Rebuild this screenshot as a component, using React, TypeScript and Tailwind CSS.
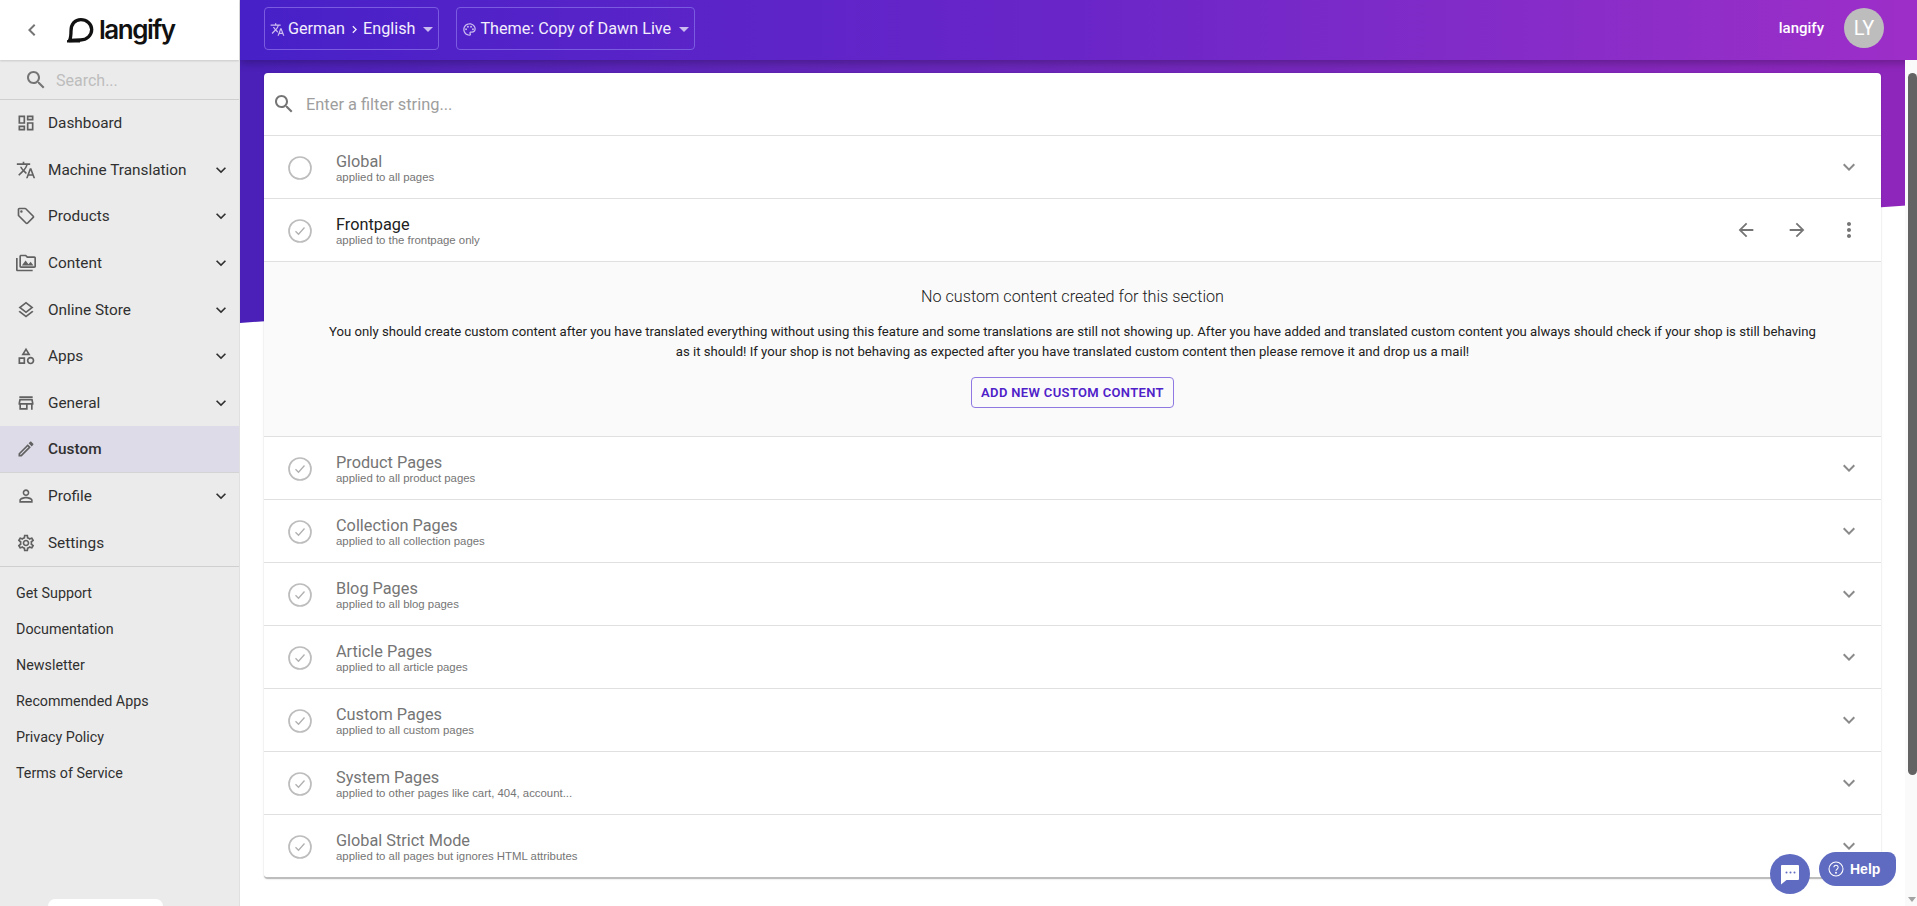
import { ReactNode } from "react";

const paths = {
  dashboard:
    "M19 5v2h-4V5h4M9 5v6H5V5h4m10 8v6h-4v-6h4M9 17v2H5v-2h4M21 3h-8v6h8V3zM11 3H3v10h8V3zm10 8h-8v10h8V11zm-10 4H3v6h8v-6z",
  translate:
    "M12.87 15.07l-2.54-2.51.03-.03c1.74-1.94 2.98-4.17 3.71-6.53H17V4h-7V2H8v2H1v1.99h11.17C11.5 7.92 10.43 9.75 9 11.35 8.07 10.32 7.3 9.19 6.69 8h-2c.73 1.63 1.73 3.17 2.98 4.56l-5.09 5.02L4 19l5-5 3.11 3.11.76-2.04zM18.5 10h-2L12 22h2l1.12-3h4.75L21 22h2l-4.5-12zm-2.62 7l1.62-4.33L19.12 17h-3.24z",
  tag: "M21.41 11.58l-9-9C12.05 2.22 11.55 2 11 2H4c-1.1 0-2 .9-2 2v7c0 .55.22 1.05.59 1.42l9 9c.36.36.86.58 1.41.58s1.05-.22 1.41-.59l7-7c.37-.36.59-.86.59-1.41s-.23-1.06-.59-1.42zM13 20.01L4 11V4h7v-.01l9 9-7 7.02zM6.5 5A1.5 1.5 0 1 0 6.5 8 1.5 1.5 0 1 0 6.5 5z",
  media:
    "M2 6H0v5h.01L0 20c0 1.1.9 2 2 2h18v-2H2V6zm5 9h14l-3.5-4.5-2.5 3.01L11.5 9zM22 4h-8l-2-2H6c-1.1 0-1.99.9-1.99 2L4 16c0 1.1.9 2 2 2h16c1.1 0 2-.9 2-2V6c0-1.1-.9-2-2-2zm0 12H6V4h5.17l1.41 1.41.59.59H22v10z",
  layers:
    "M11.99 18.54l-7.37-5.73L3 14.07l9 7 9-7-1.63-1.27zM12 16l7.36-5.73L21 9l-9-7-9 7 1.63 1.27L12 16zm0-11.47L17.74 9 12 13.47 6.26 9 12 4.53z",
  category:
    "M12 2l-5.5 9h11L12 2zm0 3.84L13.93 9h-3.87L12 5.84zM17.5 13c-2.49 0-4.5 2.01-4.5 4.5s2.01 4.5 4.5 4.5 4.5-2.01 4.5-4.5-2.01-4.5-4.5-4.5zm0 7c-1.38 0-2.5-1.12-2.5-2.5s1.12-2.5 2.5-2.5 2.5 1.12 2.5 2.5-1.12 2.5-2.5 2.5zM3 21.5h8v-8H3v8zm2-6h4v4H5v-4z",
  store:
    "M20 4H4v2h16V4zm1 10v-2l-1-5H4l-1 5v2h1v6h10v-6h4v6h2v-6h1zm-9 4H6v-4h6v4zm-6.96-6l.6-3h12.72l.6 3H5.04z",
  edit: "M14.06 9.02l.92.92L5.92 19H5v-.92l9.06-9.06M17.66 3c-.25 0-.51.1-.7.29l-1.83 1.83 3.75 3.75 1.83-1.83c.39-.39.39-1.02 0-1.41l-2.34-2.34c-.2-.2-.45-.29-.71-.29zm-3.6 3.19L3 17.25V21h3.75L17.81 9.94l-3.75-3.75z",
  person:
    "M12 5.9c1.16 0 2.1.94 2.1 2.1s-.94 2.1-2.1 2.1S9.9 9.16 9.9 8s.94-2.1 2.1-2.1m0 9c2.97 0 6.1 1.46 6.1 2.1v1.1H5.9V17c0-.64 3.13-2.1 6.1-2.1M12 4C9.79 4 8 5.79 8 8s1.79 4 4 4 4-1.79 4-4-1.79-4-4-4zm0 9c-2.67 0-8 1.34-8 4v3h16v-3c0-2.66-5.33-4-8-4z",
  settings:
    "M19.43 12.98c.04-.32.07-.64.07-.98 0-.34-.03-.66-.07-.98l2.11-1.65c.19-.15.24-.42.12-.64l-2-3.46c-.09-.16-.26-.25-.44-.25-.06 0-.12.01-.17.03l-2.49 1c-.52-.4-1.08-.73-1.69-.98l-.38-2.65C14.46 2.18 14.25 2 14 2h-4c-.25 0-.46.18-.49.42l-.38 2.65c-.61.25-1.17.59-1.69.98l-2.49-1c-.06-.02-.12-.03-.18-.03-.17 0-.34.09-.43.25l-2 3.46c-.13.22-.07.49.12.64l2.11 1.65c-.04.32-.07.65-.07.98 0 .33.03.66.07.98l-2.11 1.65c-.19.15-.24.42-.12.64l2 3.46c.09.16.26.25.44.25.06 0 .12-.01.17-.03l2.49-1c.52.4 1.08.73 1.69.98l.38 2.65c.03.24.24.42.49.42h4c.25 0 .46-.18.49-.42l.38-2.65c.61-.25 1.17-.59 1.69-.98l2.49 1c.06.02.12.03.18.03.17 0 .34-.09.43-.25l2-3.46c.12-.22.07-.49-.12-.64l-2.11-1.65zm-1.98-1.71c.04.31.05.52.05.73 0 .21-.02.43-.05.73l-.14 1.13.89.7 1.08.84-.7 1.21-1.27-.51-1.04-.42-.9.68c-.43.32-.84.56-1.25.73l-1.06.43-.16 1.13-.2 1.35h-1.4l-.19-1.35-.16-1.13-1.06-.43c-.43-.18-.83-.41-1.23-.71l-.91-.7-1.06.43-1.27.51-.7-1.21 1.08-.84.89-.7-.14-1.13c-.03-.31-.05-.54-.05-.74s.02-.43.05-.73l.14-1.13-.89-.7-1.08-.84.7-1.21 1.27.51 1.04.42.9-.68c.43-.32.84-.56 1.25-.73l1.06-.43.16-1.13.2-1.35h1.39l.19 1.35.16 1.13 1.06.43c.43.18.83.41 1.23.71l.91.7 1.06-.43 1.27-.51.7 1.21-1.07.85-.89.7.14 1.13zM12 8c-2.21 0-4 1.79-4 4s1.79 4 4 4 4-1.79 4-4-1.79-4-4-4zm0 6c-1.1 0-2-.9-2-2s.9-2 2-2 2 .9 2 2-.9 2-2 2z",
  search:
    "M15.5 14h-.79l-.28-.27C15.41 12.59 16 11.11 16 9.5 16 5.91 13.09 3 9.5 3S3 5.91 3 9.5 5.91 16 9.5 16c1.61 0 3.09-.59 4.23-1.57l.27.28v.79l5 4.99L20.49 19l-4.99-5zm-6 0C7.01 14 5 11.99 5 9.5S7.01 5 9.5 5 14 7.01 14 9.5 11.99 14 9.5 14z",
  expand: "M16.59 8.59L12 13.17 7.41 8.59 6 10l6 6 6-6z",
  chevronLeft: "M15.41 7.41L14 6l-6 6 6 6 1.41-1.41L10.83 12z",
  chevronRight: "M8.59 16.59L10 18l6-6-6-6-1.41 1.41L13.17 12z",
  arrowBack: "M20 11H7.83l5.59-5.59L12 4l-8 8 8 8 1.41-1.41L7.83 13H20v-2z",
  arrowForward: "M12 4l-1.41 1.41L16.17 11H4v2h12.17l-5.58 5.59L12 20l8-8z",
  more: "M12 8c1.1 0 2-.9 2-2s-.9-2-2-2-2 .9-2 2 .9 2 2 2zm0 2c-1.1 0-2 .9-2 2s.9 2 2 2 2-.9 2-2-.9-2-2-2zm0 6c-1.1 0-2 .9-2 2s.9 2 2 2 2-.9 2-2-.9-2-2-2z",
  palette:
    "M12 22C6.49 22 2 17.51 2 12S6.49 2 12 2s10 4.04 10 9c0 3.31-2.69 6-6 6h-1.77c-.28 0-.5.22-.5.5 0 .12.05.23.13.33.41.47.64 1.06.64 1.67 0 1.38-1.12 2.5-2.5 2.5zm0-18c-4.41 0-8 3.59-8 8s3.59 8 8 8c.28 0 .5-.22.5-.5 0-.16-.08-.28-.14-.35-.41-.46-.63-1.05-.63-1.65 0-1.38 1.12-2.5 2.5-2.5H16c2.21 0 4-1.79 4-4 0-3.86-3.59-7-8-7zM6.5 10a1.5 1.5 0 1 0 0 3 1.5 1.5 0 1 0 0-3zM9.5 6a1.5 1.5 0 1 0 0 3 1.5 1.5 0 1 0 0-3zM14.5 6a1.5 1.5 0 1 0 0 3 1.5 1.5 0 1 0 0-3zM17.5 10a1.5 1.5 0 1 0 0 3 1.5 1.5 0 1 0 0-3z",
};

const Icon = ({ d, className }: { d: string; className?: string }) => (
  <svg viewBox="0 0 24 24" fill="currentColor" className={className}>
    <path d={d} />
  </svg>
);

const StepCircle = ({ checked }: { checked: boolean }) => (
  <svg viewBox="0 0 24 24" className="mt-[2px] h-6 w-6 shrink-0" fill="none" stroke="#bdbdbd" strokeWidth="1.7">
    <circle cx="12" cy="12" r="11" />
    {checked && <path d="M7.5 12.3l3 3 6-6.8" strokeWidth="1.3" stroke="#b0b0b0" />}
  </svg>
);

const NavItem = ({ icon, label, arrow, active }: { icon: string; label: string; arrow?: boolean; active?: boolean }) => (
  <div
    className={`flex h-[46.6px] items-center pl-4 pr-[8px] ${active ? "border-b border-[#d4d4d4] bg-[#dddbe8] font-medium" : ""}`}
  >
    <Icon d={icon} className="h-5 w-5 shrink-0 text-[#616161]" />
    <span className="ml-3 mt-[1px] flex-1 text-[15.36px] text-[#303030]">{label}</span>
    {arrow && <Icon d={paths.expand} className="h-5 w-5 text-[#303030]" />}
  </div>
);

const RowText = ({ title, sub, open }: { title: string; sub: string; open?: boolean }) => (
  <div className="ml-[24px] flex-1 pt-[2px]">
    <div className={`text-[16.3px] leading-[18px] ${open ? "text-[#212121]" : "text-[#757575]"}`}>{title}</div>
    <div className="font-['Liberation_Sans',Arial,sans-serif] text-[11.4px] leading-[13px] text-[#757575]">{sub}</div>
  </div>
);

const Row = ({ title, sub, checked = true, open }: { title: string; sub: string; checked?: boolean; open?: boolean }) => (
  <div className="flex h-[63px] items-center border-b border-[#e0e0e0] pl-6 pr-[20px]">
    <StepCircle checked={checked} />
    <RowText title={title} sub={sub} open={open} />
    {open ? (
      <div className="flex items-center text-[#757575]">
        <Icon d={paths.arrowBack} className="h-[22px] w-[22px]" />
        <Icon d={paths.arrowForward} className="ml-[29px] h-[22px] w-[22px]" />
        <Icon d={paths.more} className="ml-[29px] h-6 w-6" />
      </div>
    ) : (
      <Icon d={paths.expand} className="h-6 w-6 text-[#8a8a8a]" />
    )}
  </div>
);

const Selector = ({ icon, children }: { icon: string; children: ReactNode }) => (
  <div className="flex h-[43px] items-center rounded border border-[#7b5ce0] pl-[5px] pr-[5px] pt-[1px] text-[16.2px] text-[#f3eefc]">
    <Icon d={icon} className="mr-[3px] h-[15px] w-[15px] text-[#cbbcf0]" />
    {children}
    <span className="ml-[8px] h-0 w-0 border-x-[5px] border-t-[5px] border-x-transparent border-t-[#cbbcf0]" />
  </div>
);

const links = ["Get Support", "Documentation", "Newsletter", "Recommended Apps", "Privacy Policy", "Terms of Service"];

const rows = [
  { title: "Product Pages", sub: "applied to all product pages" },
  { title: "Collection Pages", sub: "applied to all collection pages" },
  { title: "Blog Pages", sub: "applied to all blog pages" },
  { title: "Article Pages", sub: "applied to all article pages" },
  { title: "Custom Pages", sub: "applied to all custom pages" },
  { title: "System Pages", sub: "applied to other pages like cart, 404, account..." },
];

export default function App() {
  return (
    <div className="flex h-[906px] w-[1917px] overflow-hidden bg-white font-['Roboto',sans-serif]">
      <aside className="relative z-20 flex w-[240px] shrink-0 flex-col border-r border-[#e0e0e0] bg-[#ebebeb]">
        <div className="flex h-[60px] shrink-0 items-center bg-white pl-[20px] shadow-[0_1px_2px_rgba(0,0,0,0.15)]">
          <Icon d={paths.chevronLeft} className="h-6 w-6 text-[#757575]" />
          <svg viewBox="0 0 28 26" className="mb-[1px] ml-[22px] h-[26px] w-[28px]" fill="none" stroke="#111" strokeWidth="3.3">
            <path d="M3.5 23.5C4.8 21 5 19 5 14 5 7 9 2.6 14.8 2.6S25.7 7 25.7 12.6 21 23 14.5 23z" strokeLinejoin="round" />
            <path d="M1 24.3h13" strokeWidth="2.4" />
          </svg>
          <span className="ml-[5px] font-['Inter',sans-serif] text-[26px] font-semibold leading-none tracking-[-1.5px] text-[#111]">
            langify
          </span>
        </div>
        <div className="flex h-[40px] shrink-0 items-center border-b border-[#cfcfcf] pl-[24px] text-[#757575]">
          <Icon d={paths.search} className="h-6 w-6" />
          <span className="ml-2 mt-[3px] text-base text-[#bdbdbd]">Search...</span>
        </div>
        <nav className="border-b border-[#cfcfcf]">
          <NavItem icon={paths.dashboard} label="Dashboard" />
          <NavItem icon={paths.translate} label="Machine Translation" arrow />
          <NavItem icon={paths.tag} label="Products" arrow />
          <NavItem icon={paths.media} label="Content" arrow />
          <NavItem icon={paths.layers} label="Online Store" arrow />
          <NavItem icon={paths.category} label="Apps" arrow />
          <NavItem icon={paths.store} label="General" arrow />
          <NavItem icon={paths.edit} label="Custom" active />
          <NavItem icon={paths.person} label="Profile" arrow />
          <NavItem icon={paths.settings} label="Settings" />
        </nav>
        <div className="flex flex-col pt-[9px]">
          {links.map((link) => (
            <div key={link} className="flex h-9 items-center pl-4 text-[14.3px] text-[#303030]">
              {link}
            </div>
          ))}
        </div>
        <div className="mt-auto ml-[48px] h-[7px] w-[115px] rounded-t-lg bg-white" />
      </aside>

      <div className="relative flex min-w-0 flex-1 flex-col">
        <header className="relative z-10 flex h-[60px] shrink-0 items-center bg-gradient-to-r from-[#4720c8] via-[#6a25c8] via-50% to-[#9e2ec8] pb-[3px] pl-6 pr-[33px] shadow-[0_3px_8px_rgba(0,0,0,0.25)]">
          <Selector icon={paths.translate}>
            German
            <Icon d={paths.chevronRight} className="mx-[1.5px] h-[15px] w-[15px]" />
            English
          </Selector>
          <div className="ml-[17px]">
            <Selector icon={paths.palette}>Theme: Copy of Dawn Live</Selector>
          </div>
          <span className="ml-auto text-[15px] font-medium text-white">langify</span>
          <div className="-mt-[1px] ml-[20px] flex h-10 w-10 items-center justify-center rounded-full bg-[#bdbdbd] text-[20px] text-white">
            LY
          </div>
        </header>

        <div className="absolute left-0 right-0 top-[60px] h-[263px] bg-gradient-to-r from-[#4a20b8] to-[#8f26bc] [clip-path:polygon(0_100%,100%_55%,100%_0,0_0)]" />

        <div className="flex min-h-0 flex-1">
          <main className="relative min-w-0 flex-1 px-6 pt-[13px]">
            <div className="overflow-hidden rounded border-b-2 border-[#bdbdbd] bg-white shadow-[0_0_2px_rgba(0,0,0,0.2)]">
              <div className="flex h-[63px] items-center border-b border-[#e0e0e0] pl-2">
                <Icon d={paths.search} className="h-6 w-6 text-[#757575]" />
                <span className="ml-[10px] mt-[2px] text-[16.4px] text-[#9e9e9e]">Enter a filter string...</span>
              </div>
              <Row title="Global" sub="applied to all pages" checked={false} />
              <Row title="Frontpage" sub="applied to the frontpage only" open />
              <div className="flex h-[175px] flex-col items-center border-b border-[#e0e0e0] bg-[#fafafa] px-[62px] pt-[25px] text-center">
                <div className="text-[16.2px] font-light leading-5 text-[#212121]">No custom content created for this section</div>
                <p className="mt-[15px] text-[13.15px] leading-5 text-[#212121]">
                  You only should create custom content after you have translated everything without using this feature and some translations are still not showing up. After you have added and translated custom content you always should check if your shop is still behaving as it should! If your shop is not behaving as expected after you have translated custom content then please remove it and drop us a mail!
                </p>
                <div className="mt-[15px] flex h-[31px] items-center rounded border border-[#8f78e2] px-[9px] text-[13px] font-semibold tracking-[0.35px] text-[#4f21c9]">
                  ADD NEW CUSTOM CONTENT
                </div>
              </div>
              {rows.map((row) => (
                <Row key={row.title} title={row.title} sub={row.sub} />
              ))}
              <div className="flex h-[62px] items-center pl-6 pr-[20px]">
                <StepCircle checked />
                <RowText title="Global Strict Mode" sub="applied to all pages but ignores HTML attributes" />
                <Icon d={paths.expand} className="h-6 w-6 text-[#8a8a8a]" />
              </div>
            </div>
          </main>
          <div className="relative z-10 flex w-3 shrink-0 flex-col bg-[#fafafa] pl-[3px] pt-[13px]">
            <div className="h-[702px] rounded-t-md rounded-b-md bg-[#636363]" />
            <span className="mt-auto mb-[4px] h-0 w-0 border-x-[4px] border-t-[5px] border-x-transparent border-t-[#a3a3a3]" />
          </div>
        </div>

        <div className="absolute bottom-[12px] right-[107px] z-30 flex h-10 w-10 items-center justify-center rounded-full bg-[#5f6bc0]">
          <svg viewBox="0 0 24 24" className="h-6 w-6" fill="white">
            <path d="M4 3h16a1 1 0 0 1 1 1v13a1 1 0 0 1-1 1H8.5L3 22.5V4a1 1 0 0 1 1-1z" />
            <circle cx="8.5" cy="10.5" r="1" fill="#5f6bc0" />
            <circle cx="12.5" cy="10.5" r="1" fill="#5f6bc0" />
            <circle cx="16.5" cy="10.5" r="1" fill="#5f6bc0" />
          </svg>
        </div>
        <div className="absolute bottom-[20px] right-[21px] z-30 flex h-[34px] w-[77px] items-center rounded-[17px] rounded-tr-[8px] bg-[#5f6bc0] pl-[9px] text-white">
          <svg viewBox="0 0 24 24" className="h-4 w-4" fill="none" stroke="white" strokeWidth="1.6">
            <circle cx="12" cy="12" r="10.5" />
            <path d="M8.8 9.5a3.2 3.2 0 1 1 4.8 2.8c-1 .6-1.6 1.1-1.6 2.4" />
            <circle cx="12" cy="17.6" r="0.6" fill="white" />
          </svg>
          <span className="ml-[6px] font-['Liberation_Sans',Arial,sans-serif] text-[14px] font-bold">Help</span>
        </div>
      </div>
    </div>
  );
}
